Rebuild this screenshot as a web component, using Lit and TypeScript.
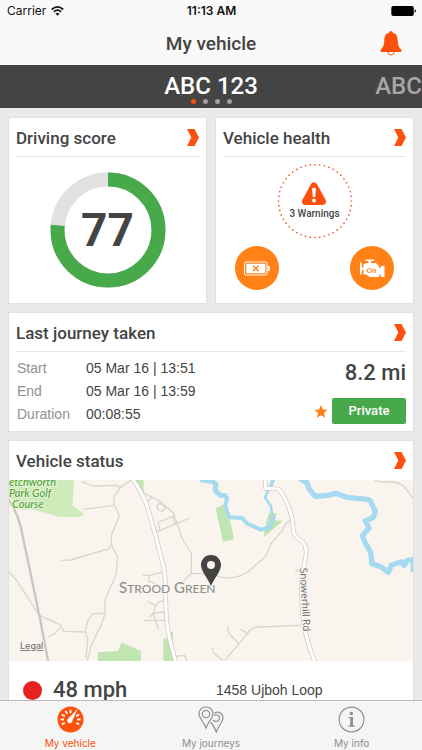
import { LitElement, html, css, svg } from "lit";
import { customElement, property } from "lit/decorators.js";
import { classMap } from "lit/directives/class-map.js";

@customElement("dash-card")
class DashCard extends LitElement {
  @property() heading = "";
  @property({ type: Boolean }) flush = false;

  static styles = css`
    :host {
      display: flex;
      flex-direction: column;
      background: #fff;
      border: 1px solid #e1e1e1;
      min-width: 0;
    }
    .head {
      display: flex;
      align-items: center;
      justify-content: space-between;
      height: 39px;
      margin: 0 7px;
      padding-top: 1px;
      box-sizing: border-box;
      border-bottom: 1px solid #e4e7e9;
      color: #444;
      text-decoration: none;
    }
    .head.flush {
      border-bottom-color: transparent;
    }
    h2 {
      margin: 0;
      font: 500 17px/20px Roboto, sans-serif;
      white-space: nowrap;
    }
    svg {
      flex: none;
    }
  `;

  render() {
    return html`
      <a href="#" class=${classMap({ head: true, flush: this.flush })}>
        <h2>${this.heading}</h2>
        <svg width="12" height="17" viewBox="0 0 12 17" aria-hidden="true">
          <path d="M0 0H7.500L12 8.500L7.500 17H0L4.300 8.500Z" fill="#fd500d" />
        </svg>
      </a>
      <slot></slot>
    `;
  }
}

@customElement("score-ring")
class ScoreRing extends LitElement {
  @property({ type: Number }) value = 0;

  static styles = css`
    :host {
      display: grid;
      place-items: center;
    }
    svg,
    .value {
      grid-area: 1 / 1;
    }
    .value {
      font: bold 46px/50px Roboto, sans-serif;
      color: #444;
    }
  `;

  render() {
    return html`
      <svg width="116" height="116" viewBox="0 0 116 116" aria-hidden="true">
        <circle cx="58" cy="58" r="50.500" fill="none" stroke="#e1e1e1" stroke-width="14" />
        <circle cx="58" cy="58" r="50.500" fill="none" stroke="#48a94b" stroke-width="14"
          pathLength="100" stroke-dasharray="${this.value - 0.5} 100" transform="rotate(-90 58 58)" />
      </svg>
      <span class="value">${this.value}</span>
    `;
  }
}

@customElement("area-map")
class AreaMap extends LitElement {
  static styles = css`
    :host {
      display: block;
    }
    svg {
      display: block;
      width: 100%;
      height: auto;
    }
    .lane {
      fill: none;
      stroke: #d9d4ce;
      stroke-width: 4;
      stroke-linejoin: round;
    }
    .case {
      fill: none;
      stroke: #d2cdc8;
      stroke-width: 14;
      stroke-linejoin: round;
    }
    .road {
      fill: none;
      stroke: #fff;
      stroke-width: 9;
      stroke-linejoin: round;
    }
    .rail {
      fill: none;
      stroke: #c9c6c3;
      stroke-width: 7;
    }
    .water {
      fill: none;
      stroke: #a6daf0;
      stroke-linejoin: round;
    }
    .wood {
      fill: #c0e5b0;
    }
    .golf {
      fill: #d0ebba;
    }
    text {
      paint-order: stroke;
      stroke: #f9f5ee;
      stroke-width: 2px;
      stroke-linejoin: round;
    }
    .park {
      font: italic 500 11px/11px Lato, sans-serif;
      fill: #4ba32f;
      stroke: #e9f5df;
    }
    .place {
      font: 500 15px Lato, sans-serif;
      fill: #8f8f8f;
    }
    .small {
      font-size: 12px;
    }
    .street {
      font: 10px "Open Sans", sans-serif;
      fill: #666;
    }
    .legal {
      font: 500 9px Inter, sans-serif;
      fill: #777;
      text-decoration: underline;
    }
  `;

  render() {
    const main = "M395 120Q422 155 440 200Q468 290 490 385Q498 420 497 475Q498 555 508 600L527 672";
    const hill = "M795 120L797 151L836 153Q865 190 877 245L881 285Q889 300 908 311Q923 330 917 355L905 425Q902 500 913 570Q922 610 944 672";
    return html`
      <svg viewBox="0 0 404 181" role="img" aria-label="Map of Strood Green">
        <rect width="404" height="181" fill="#f9f5ee" />
        ${svg`<g transform="translate(-9 -42) scale(.33333)">
          <path class="golf" d="M26 120H222L218 203L254 228L235 237H178L100 215H64L26 175Z" />
          <path class="wood" d="M405 120H431V167L418 155ZM294 642L354 640L365 613L423 640V672H294ZM490 602L512 600V582H519V597L514 620L516 640L490 630ZM490 602H507L516 640L522 672H490ZM647 211L670 200L692 255L702 303L669 311ZM807 225H830L825 247L848 248L793 297V275Z" />
          <path class="lane" d="M244 130L280 144L350 142L362 148L395 125M362 148L342 175L343 202L358 233L335 290L334 320L353 357L348 410L315 485L316 525L277 528L263 550L256 580L263 605L258 660M316 525L304 560L275 620L262 668M250 214L343 202M184 367L212 366L328 332L332 322M26 400L52 430L118 532L180 560L191 580L256 582M182 565L165 587L144 597" />
          <path class="lane" d="M432 165L480 190L520 225L547 303L574 345V406L550 430M574 406L640 408Q700 438 755 392L798 355L811 320L849 275L857 257L878 243M440 190L457 180M470 205L476 196L490 200L496 211L486 221L475 216ZM474 253L518 235L525 258L480 277ZM465 284L530 256L570 240M428 412H447L490 402M447 412V430L465 436M442 491L467 502L460 526L475 574M460 526L448 538M467 502L478 490H494M460 526L494 522M432 547H495M527 655L554 652L560 668M674 668L740 590Q755 567 775 567L902 562M716 618L686 585L683 565M720 573L743 586M637 628L641 645L670 668M885 400L905 396M1124 127L1145 133Q1200 125 1220 155L1242 185" />
          <path class="rail" d="M26 185Q53 225 63 270L118 532L145 672" />
          <path class="water" stroke-width="15" d="M600 125L636 130L648 139L645 157L662 172L682 174" />
          <path class="water" stroke-width="12" d="M682 174L676 205L688 238L726 240L742 257L782 275L810 268L820 235M821 120L811 149" />
          <path class="water" stroke-width="8" d="M811 145L795 178L813 205L817 235L812 262" />
          <path class="water" stroke-width="16" d="M897 120L921 134L928 154L946 175L982 172L1007 166L1040 178L1101 184L1111 188L1126 221L1120 238L1096 249L1107 270L1087 293L1097 317L1112 343L1116 377L1144 387L1165 403L1174 382L1203 371L1213 382L1221 367L1240 365V402" />
          <path class="case" d="${main}" /><path class="road" d="${main}" />
          <path class="case" d="${hill}" /><path class="road" d="${hill}" />
        </g>
        <text class="park" x="0" y="6">etchworth</text>
        <text class="park" x="0" y="17">Park Golf</text>
        <text class="park" x="3" y="28">Course</text>
        <text class="place" x="110" y="113">S<tspan class="small">TROOD</tspan> G<tspan class="small">REEN</tspan></text>
        <text class="street" transform="translate(291 88) rotate(87)">Snowerhill Rd</text>
        <text class="legal" x="11" y="169">Legal</text>
        <path fill="#444" fill-rule="evenodd" d="M202 75C195.500 75 192 80 192 85C192 91 198 97 202 106C206 97 212 91 212 85C212 80 208.500 75 202 75ZM202 81A4 4 0 1 1 202 89A4 4 0 1 1 202 81Z" />`}
      </svg>
    `;
  }
}

@customElement("app-root")
class AppRoot extends LitElement {
  static styles = css`
    :host {
      display: flex;
      flex-direction: column;
      height: 100vh;
      background: #eaeaea;
      color: #444;
      font-family: Roboto, sans-serif;
    }
    svg {
      display: block;
      flex: none;
    }
    button {
      border: 0;
      padding: 0;
      background: none;
      font: inherit;
      color: inherit;
    }
    .top {
      flex: none;
      background: #f9f9f9;
    }
    .status {
      display: grid;
      grid-template-columns: 1fr auto 1fr;
      align-items: center;
      height: 22px;
      padding: 0 6px 0 7px;
      color: #111;
      font: 12px/16px Inter, sans-serif;
    }
    .carrier {
      display: flex;
      align-items: center;
      gap: 5px;
    }
    .time {
      font-weight: 600;
    }
    .battery {
      justify-self: end;
    }
    .nav {
      display: grid;
      grid-template-columns: 1fr auto 1fr;
      align-items: center;
      height: 43px;
      padding: 0 20px;
    }
    h1 {
      grid-column: 2;
      margin: 0;
      font: 500 19px/24px Roboto, sans-serif;
    }
    .bell {
      justify-self: end;
    }
    .plates {
      flex: none;
      display: flex;
      flex-direction: column;
      height: 43px;
      background: #444;
      overflow: hidden;
    }
    .track {
      display: flex;
      padding-left: 25%;
    }
    .plate {
      flex: 0 0 calc(100% * 2 / 3);
      text-align: center;
      font: 500 24px/30px Roboto, sans-serif;
      color: #a6a6a6;
      padding-top: 6px;
    }
    .plate.current {
      color: #fff;
    }
    .dots {
      display: flex;
      justify-content: center;
      gap: 7px;
      margin-top: -2px;
    }
    .dot {
      width: 5px;
      height: 5px;
      border-radius: 50%;
      background: #a0a0a0;
    }
    .dot.on {
      background: #fd500d;
    }
    main {
      flex: 1;
      min-height: 0;
      overflow-y: auto;
      scrollbar-width: none;
      display: flex;
      flex-direction: column;
      gap: 8px;
      padding: 9px 8px 8px;
    }
    dash-card {
      flex: none;
    }
    .pair {
      flex: none;
      display: grid;
      grid-template-columns: 1fr 1fr;
      gap: 8px;
    }
    score-ring {
      padding: 15px 0;
    }
    .health {
      display: flex;
      flex-direction: column;
      align-items: center;
      gap: 7px;
      padding: 6px 0 11px;
    }
    .warn {
      display: grid;
      place-items: center;
    }
    .warn > * {
      grid-area: 1 / 1;
    }
    .alert {
      display: flex;
      flex-direction: column;
      align-items: center;
      font: 500 10px/14px Roboto, sans-serif;
      gap: 1px;
    }
    .faults {
      align-self: stretch;
      display: flex;
      justify-content: space-between;
      padding: 0 19px;
    }
    .journey {
      display: flex;
      justify-content: space-between;
      padding: 5px 7px 5px 8px;
    }
    dl {
      display: grid;
      grid-template-columns: 69px auto;
      margin: 0;
      font: 14px/23px "Liberation Sans", sans-serif;
    }
    dt {
      color: #919191;
    }
    dd {
      margin: 0;
    }
    .trip {
      display: flex;
      flex-direction: column;
      align-items: flex-end;
      justify-content: space-between;
      padding-bottom: 2px;
    }
    .big {
      font: 500 22px/32px Roboto, sans-serif;
    }
    .tag {
      display: flex;
      align-items: center;
      gap: 4px;
    }
    .private {
      width: 74px;
      height: 26px;
      border-radius: 2px;
      background: #48a94b;
      color: #fff;
      font: 500 13px/26px Roboto, sans-serif;
    }
    .speed {
      display: grid;
      grid-template-columns: 1fr 1fr;
      align-items: center;
      padding: 13px 0 12px;
    }
    .moving {
      display: flex;
      align-items: center;
      gap: 11px;
      padding-left: 14px;
    }
    .lamp {
      width: 19px;
      height: 19px;
      border-radius: 50%;
      background: #e7211f;
    }
    .address {
      padding-left: 5px;
      font: 14px/20px "Liberation Sans", sans-serif;
    }
    .tabs {
      flex: none;
      display: grid;
      grid-template-columns: repeat(3, 1fr);
      height: 50px;
      box-sizing: border-box;
      border-top: 1px solid #bbb;
      background: #f5f5f5;
    }
    .tab {
      display: flex;
      flex-direction: column;
      align-items: center;
      gap: 3px;
      padding-top: 5px;
      color: #8f8f8f;
      font: 10px/14px Inter, sans-serif;
      text-decoration: none;
    }
    .tab.on {
      color: #fd500d;
    }
    .on-label {
      font: 500 8px Roboto, sans-serif;
      fill: #ff8117;
    }
  `;

  private gauge() {
    const ticks = [-120, -90, -60, -30, 0, 60, 90, 120];
    return html`<svg width="27" height="27" viewBox="0 0 27 27" aria-hidden="true">
      <circle cx="13.500" cy="13.500" r="13" fill="#fd500d" />
      ${ticks.map((a) => svg`<path d="M13.500 3.500V7" stroke="#fff" stroke-width="1.800" transform="rotate(${a} 13.500 13.500)" />`)}
      <path d="M20.500 3L15.500 14.500A2.700 2.700 0 1 1 11.500 12.200Z" fill="#fff" />
    </svg>`;
  }

  private pins() {
    return html`<svg width="26" height="27" viewBox="0 0 26 27" fill="none" stroke="#8f8f8f" stroke-width="1.200" aria-hidden="true">
      <path d="M8 1C3.500 1 1 4.200 1 7.800C1 12 5.500 15.500 8 22C10.500 15.500 15 12 15 7.800C15 4.200 12.500 1 8 1Z" />
      <circle cx="8" cy="8" r="3.700" />
      <path d="M16.500 7.200C20.500 4.500 25 8 25 12C25 16 20.500 19.500 18.300 26C17 22 14.500 18.700 12.800 16.200" />
      <path d="M16 9.500C19 7.500 22 10 21.500 12.700C21 15.500 17.500 16.500 15 14.200" />
    </svg>`;
  }

  private info() {
    return html`<svg width="27" height="27" viewBox="0 0 27 27" aria-hidden="true">
      <circle cx="13.500" cy="13.500" r="12.400" fill="none" stroke="#8f8f8f" stroke-width="1.200" />
      <circle cx="13.300" cy="7.500" r="1.800" fill="#8f8f8f" />
      <path d="M10.500 11H15V19.500H16.800V20.700H10.300V19.500H12.200V12.200H10.500Z" fill="#8f8f8f" />
    </svg>`;
  }

  render() {
    return html`
      <header class="top">
        <div class="status">
          <span class="carrier">Carrier
            <svg width="13" height="10" viewBox="0 0 13 10" fill="none" stroke="#111" stroke-width="1.700" aria-hidden="true">
              <path d="M.8 3.500Q6.500 -1.600 12.200 3.500M2.900 5.800Q6.500 2.600 10.100 5.800" />
              <path d="M4.500 7.500Q6.500 5.900 8.500 7.500L6.500 9.700Z" fill="#111" stroke="none" />
            </svg>
          </span>
          <span class="time">11:13 AM</span>
          <svg class="battery" width="25" height="10" viewBox="0 0 25 10" aria-hidden="true">
            <rect x=".3" width="22.500" height="10" rx="2" fill="#000" />
            <path d="M23.700 3.200Q25 3.700 25 5T23.700 6.800Z" fill="#000" />
          </svg>
        </div>
        <div class="nav">
          <h1>My vehicle</h1>
          <button class="bell" aria-label="Notifications">
            <svg width="22" height="25" viewBox="0 0 22 25" aria-hidden="true">
              <circle cx="11" cy="20.800" r="3.200" fill="#f9f9f9" stroke="#fd500d" />
              <path d="M11 0Q12.600 0 12.800 1.700C16.700 2.700 17.500 5.500 17.700 9C18 14 18.500 16 21 18.300Q21.800 19.200 21.200 21H.8Q.2 19.200 1 18.300C3.500 16 4 14 4.300 9C4.500 5.500 5.300 2.700 9.200 1.700Q9.400 0 11 0Z" fill="#fd500d" />
            </svg>
          </button>
        </div>
      </header>
      <section class="plates" aria-label="Vehicles">
        <div class="track">
          <div class="plate current">ABC 123</div>
          <div class="plate">ABC 123</div>
        </div>
        <div class="dots">
          ${[0, 1, 2, 3].map((i) => html`<span class=${classMap({ dot: true, on: i === 0 })}></span>`)}
        </div>
      </section>
      <main>
        <div class="pair">
          <dash-card heading="Driving score"><score-ring value="77"></score-ring></dash-card>
          <dash-card heading="Vehicle health">
            <div class="health">
              <div class="warn">
                <svg width="76" height="76" viewBox="0 0 76 76" aria-hidden="true">
                  <circle cx="38" cy="38" r="36.500" fill="none" stroke="#ec5a35" stroke-width="1.700"
                    stroke-linecap="round" pathLength="144" stroke-dasharray="0 3" />
                </svg>
                <div class="alert">
                  <svg width="26" height="24" viewBox="0 0 26 24" aria-hidden="true">
                    <path d="M13 4L21.500 19.500H4.500Z" fill="#fd500d" stroke="#fd500d" stroke-width="7" stroke-linejoin="round" />
                    <path d="M11 6.500Q13 4.800 15 6.500L14.200 15H11.800Z" fill="#fff" />
                    <circle cx="13" cy="18.500" r="1.900" fill="#fff" />
                  </svg>
                  <span>3 Warnings</span>
                </div>
              </div>
              <div class="faults">
                <svg width="44" height="44" viewBox="0 0 44 44" role="img" aria-label="Battery fault">
                  <circle cx="22" cy="22" r="22" fill="#ff8117" />
                  <rect x="9.500" y="16" width="22.500" height="13" rx="1.500" fill="none" stroke="#fff" />
                  <rect x="11.300" y="17.800" width="19" height="9.400" fill="#fff" />
                  <path d="M32.500 20H34.800V25H32.500Z" fill="#fff" />
                  <path d="M18 19.800L23.500 25.300M23.500 19.800L18 25.300" stroke="#ff8117" stroke-width="1.400" />
                </svg>
                <svg width="44" height="44" viewBox="0 0 44 44" role="img" aria-label="Engine on">
                  <circle cx="22" cy="22" r="22" fill="#ff8117" />
                  <path d="M15.500 13.500H24V15H21V17H26L29 20V22H30.500V20.500L34.500 19.500V31.500L30.500 30.500V28.500H29V31H20L16 28.500H13.500V24H11.800V28.500H10V16.500H11.800V21.500H13.500V18.500L16.500 17H18.500V15H15.500Z" fill="#fff" />
                  <text class="on-label" x="16.500" y="27">On</text>
                </svg>
              </div>
            </div>
          </dash-card>
        </div>
        <dash-card heading="Last journey taken">
          <div class="journey">
            <dl>
              <dt>Start</dt><dd>05 Mar 16 | 13:51</dd>
              <dt>End</dt><dd>05 Mar 16 | 13:59</dd>
              <dt>Duration</dt><dd>00:08:55</dd>
            </dl>
            <div class="trip">
              <span class="big">8.2 mi</span>
              <span class="tag">
                <svg width="14" height="13" viewBox="0 0 14 13" aria-hidden="true">
                  <path d="M7 0L8.900 4.400L13.500 4.800L10 8L11 12.700L7 10.200L3 12.700L4 8L.5 4.800L5.100 4.400Z" fill="#ff8117" />
                </svg>
                <button class="private">Private</button>
              </span>
            </div>
          </div>
        </dash-card>
        <dash-card heading="Vehicle status" flush>
          <area-map></area-map>
          <div class="speed">
            <span class="moving"><span class="lamp"></span><span class="big">48 mph</span></span>
            <span class="address">1458 Ujboh Loop</span>
          </div>
        </dash-card>
      </main>
      <nav class="tabs">
        <a href="#" class="tab on">${this.gauge()}<span>My vehicle</span></a>
        <a href="#" class="tab">${this.pins()}<span>My journeys</span></a>
        <a href="#" class="tab">${this.info()}<span>My info</span></a>
      </nav>
    `;
  }
}
